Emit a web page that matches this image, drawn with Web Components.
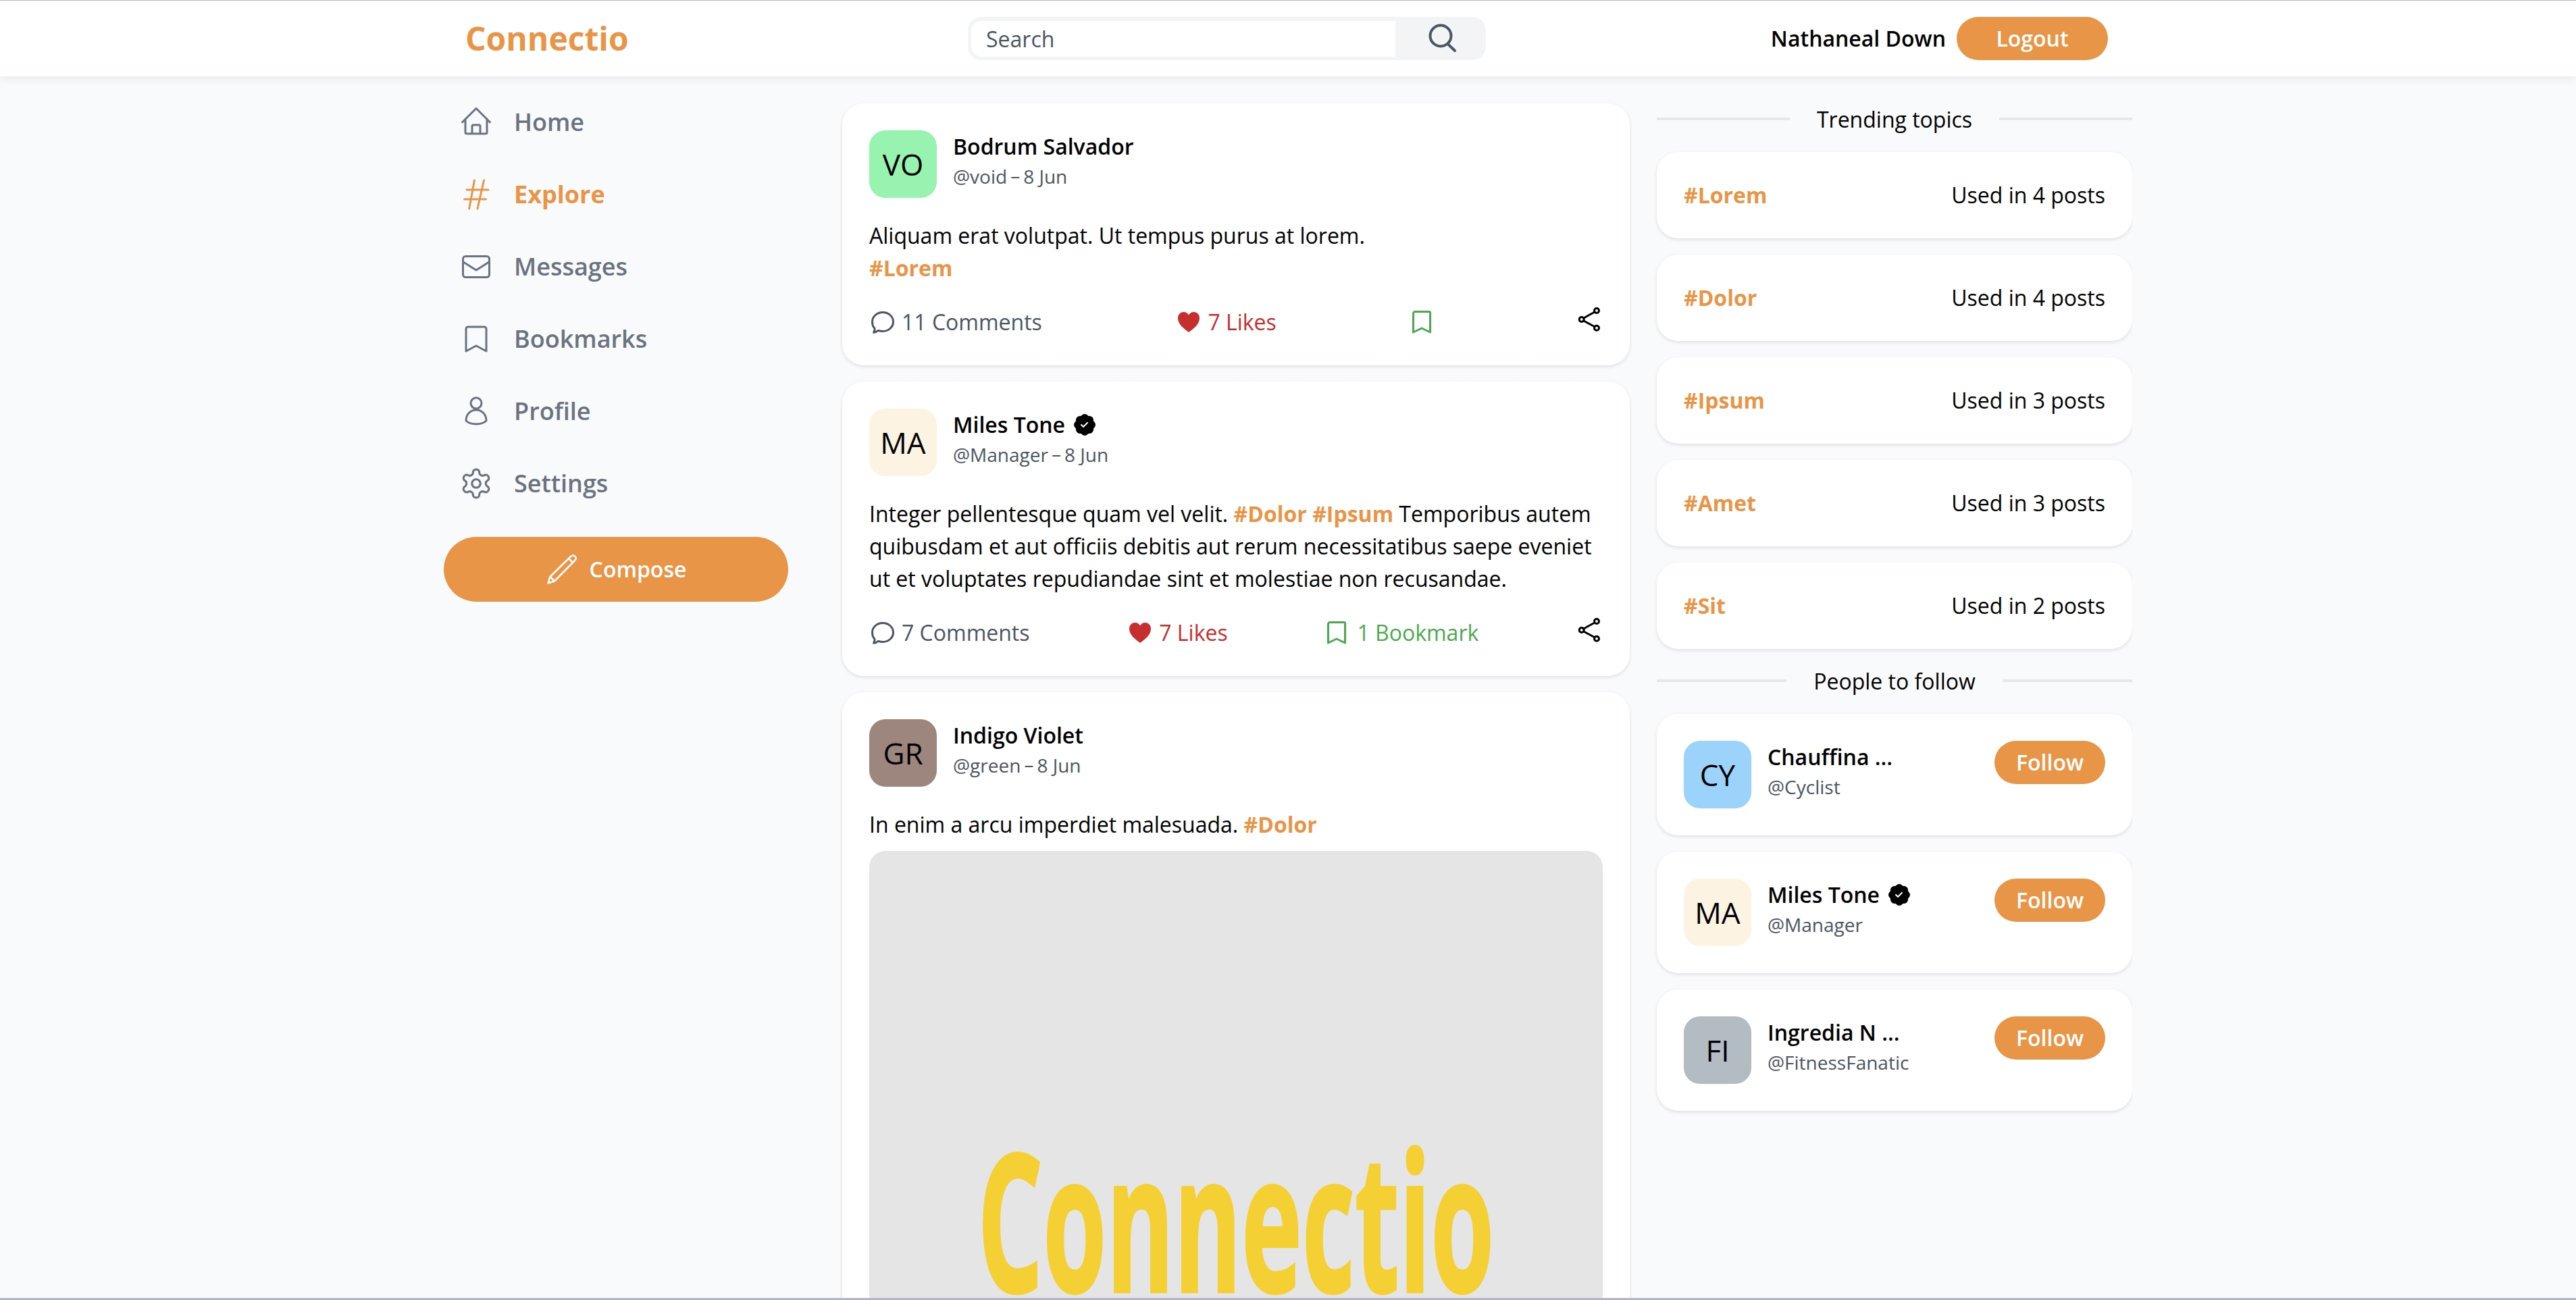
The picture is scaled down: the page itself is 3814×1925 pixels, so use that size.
<!DOCTYPE html>
<html lang="en">
<head>
<meta charset="utf-8">
<title>Connectio</title>
<style>
html,body{margin:0;padding:0;height:1925px;overflow:hidden;background:#f9fafb}
body{font-family:"Open Sans","Noto Sans",sans-serif;font-size:32px;line-height:48px;color:#000;box-sizing:border-box;border-bottom:3px solid #b1b6c6}
.layout{display:flex;width:2500px;margin:0 auto;height:1809px;overflow:hidden}
.layout>side-nav{width:510px;margin-right:80px;flex:none}
.layout>feed-col{width:1166px;margin-right:40px;flex:none}
.layout>aside-col{width:704px;flex:none}
b.tag{color:#e89548;font-weight:700}
</style>
</head>
<body>
<app-header user="Nathaneal Down"></app-header>
<div class="layout">
  <side-nav>
    <nav-item icon="house" label="Home"></nav-item>
    <nav-item icon="hash" label="Explore" active></nav-item>
    <nav-item icon="mail" label="Messages"></nav-item>
    <nav-item icon="bookmark" label="Bookmarks"></nav-item>
    <nav-item icon="person" label="Profile"></nav-item>
    <nav-item icon="gear" label="Settings"></nav-item>
    <compose-button slot="compose"></compose-button>
  </side-nav>
  <feed-col>
    <post-card initials="VO" color="#98f2b0" name="Bodrum Salvador" handle="@void" comments="11 Comments" likes="7 Likes" bookmarks="">
      Aliquam erat volutpat. Ut tempus purus at lorem.<br><b class="tag">#Lorem</b>
    </post-card>
    <post-card initials="MA" color="#fdf3e2" name="Miles Tone" verified handle="@Manager" comments="7 Comments" likes="7 Likes" bookmarks="1 Bookmark">
      Integer pellentesque quam vel velit. <b class="tag">#Dolor</b> <b class="tag">#Ipsum</b> Temporibus autem quibusdam et aut officiis debitis aut rerum necessitatibus saepe eveniet ut et voluptates repudiandae sint et molestiae non recusandae.
    </post-card>
    <post-card initials="GR" color="#9d867d" name="Indigo Violet" handle="@green" comments="3 Comments" likes="5 Likes" bookmarks="">
      In enim a arcu imperdiet malesuada. <b class="tag">#Dolor</b>
      <logo-image slot="media"></logo-image>
    </post-card>
  </feed-col>
  <aside-col>
    <section-title>Trending topics</section-title>
    <trend-card tag="#Lorem" count="Used in 4 posts"></trend-card>
    <trend-card tag="#Dolor" count="Used in 4 posts"></trend-card>
    <trend-card tag="#Ipsum" count="Used in 3 posts"></trend-card>
    <trend-card tag="#Amet" count="Used in 3 posts"></trend-card>
    <trend-card tag="#Sit" count="Used in 2 posts"></trend-card>
    <section-title>People to follow</section-title>
    <follow-card initials="CY" color="#9bd3fb" name="Chauffina ..." handle="@Cyclist"></follow-card>
    <follow-card initials="MA" color="#fdf3e2" name="Miles Tone" verified handle="@Manager"></follow-card>
    <follow-card initials="FI" color="#b3bbc3" name="Ingredia N ..." handle="@FitnessFanatic"></follow-card>
  </aside-col>
</div>
<script>
const ICONS={
 house:['0 0 48 48','<path d="M3.5 24 24 3.5 44.5 24M8 19v20a2 2 0 0 0 2 2h28a2 2 0 0 0 2-2V19M18 41V30a2 2 0 0 1 2-2h8a2 2 0 0 1 2 2v11"/>',3],
 hash:['0 0 48 48','<path d="M21.4 3 13.7 45M35.5 3 26 45M10 17h32M6.500 31h32"/>',3],
 mail:['0 0 48 48','<rect x="4.500" y="8.500" width="39" height="31" rx="4"/><path d="M5 17l19 12 19-12"/>',3],
 bookmark:['0 0 48 48','<path d="M9 42V9a3 3 0 0 1 3-3h24a3 3 0 0 1 3 3v33l-15-8z"/>',3],
 person:['0 0 48 48','<circle cx="24" cy="12" r="8"/><path d="M9 38c0-10 7-16 15-16s15 6 15 16c-4 4-10 5-15 5s-11-1-15-5z"/>',3],
 gear:['0.5 0.5 23 23','<path d="M12.220 2h-.44a2 2 0 0 0-2 2v.18a2 2 0 0 1-1 1.730l-.43.25a2 2 0 0 1-2 0l-.15-.08a2 2 0 0 0-2.730.73l-.22.38a2 2 0 0 0 .73 2.730l.15.1a2 2 0 0 1 1 1.720v.51a2 2 0 0 1-1 1.740l-.15.09a2 2 0 0 0-.73 2.730l.22.38a2 2 0 0 0 2.730.73l.15-.08a2 2 0 0 1 2 0l.43.25a2 2 0 0 1 1 1.730V20a2 2 0 0 0 2 2h.44a2 2 0 0 0 2-2v-.18a2 2 0 0 1 1-1.730l.43-.25a2 2 0 0 1 2 0l.15.08a2 2 0 0 0 2.730-.73l.22-.39a2 2 0 0 0-.73-2.730l-.15-.08a2 2 0 0 1-1-1.740v-.5a2 2 0 0 1 1-1.740l.15-.09a2 2 0 0 0 .73-2.730l-.22-.38a2 2 0 0 0-2.730-.73l-.15.08a2 2 0 0 1-2 0l-.43-.25a2 2 0 0 1-1-1.730V4a2 2 0 0 0-2-2z"/><circle cx="12" cy="12" r="3"/>',1.5],
 pencil:['0 0 48 48','<path d="M3.500 44.500 6.500 35 37 5c2-2 5-2 6.500 0 2 2 1.500 4-.5 6L13 41.500zM6.500 35 13 41.500M34 8l6 6"/>',2.5],
 search:['0 0 48 48','<circle cx="24" cy="20" r="15.500"/><path d="M34.500 32 45 42"/>',4],
 comment:['0 0 40 40','<path d="M20 5.500c8.500 0 15.500 6 15.500 14s-7 14-15.500 14c-2.500 0-4.500-.4-6.500-1.200-2 1.600-4.500 2.700-7 3 1-1.500 1.700-3.500 1.600-6C5.500 27 4.500 23.500 4.500 19.500 4.500 11.500 11.500 5.500 20 5.500z"/>',3],
 share:['0 0 40 40','<circle cx="31" cy="3" r="3.500"/><circle cx="8.700" cy="16" r="3.500"/><circle cx="31" cy="28.700" r="3.500"/><path d="M28 5 11.700 14M11.700 18 28 26.700"/>',3],
 mark:['0 0 40 40','<path d="M5.500 35V7a2.500 2.500 0 0 1 2.500-2.500h22A2.500 2.500 0 0 1 30.500 7v28l-12.500-6z"/>',3]
};
function icon(name,size,color){
 const [vb,body,sw]=ICONS[name];
 return `<svg xmlns="http://www.w3.org/2000/svg" width="${size}" height="${size}" viewBox="${vb}" fill="none" stroke="${color}" stroke-width="${sw}" stroke-linecap="round" stroke-linejoin="round" style="display:block;overflow:visible;flex:none">${body}</svg>`;
}
const HEART='<svg xmlns="http://www.w3.org/2000/svg" width="40" height="40" viewBox="0 0 40 40" fill="#c62f2f" style="display:block;flex:none"><path d="M20 35C12 29 4 23 4 14 4 8 8.500 5 12.500 5 16 5 18.500 7 20 9.500 21.500 7 24 5 27.500 5 31.500 5 36 8 36 14 36 23 28 29 20 35z"/></svg>';
const BADGE='<svg xmlns="http://www.w3.org/2000/svg" width="32" height="32" viewBox="0 0 16 16" fill="#000" style="display:block;flex:none"><path d="M10.067.87a2.890 2.890 0 0 0-4.134 0l-.622.638-.89-.011a2.890 2.890 0 0 0-2.924 2.924l.01.89-.636.622a2.890 2.890 0 0 0 0 4.134l.637.622-.011.89a2.890 2.890 0 0 0 2.924 2.924l.89-.01.622.636a2.890 2.890 0 0 0 4.134 0l.622-.637.89.011a2.890 2.890 0 0 0 2.924-2.924l-.01-.89.636-.622a2.890 2.890 0 0 0 0-4.134l-.637-.622.011-.89a2.890 2.890 0 0 0-2.924-2.924l-.89.01-.622-.636zm.287 5.984-3 3a.5.5 0 0 1-.708 0l-1.500-1.500a.5.5 0 1 1 .708-.708L7 8.793l2.646-2.647a.5.5 0 0 1 .708.708z"/></svg>';

class Comp extends HTMLElement{
 connectedCallback(){ if(this.shadowRoot) return; this.attachShadow({mode:'open'}); this.shadowRoot.innerHTML=this.render(); }
 a(n){return this.getAttribute(n)||''}
}
const ORANGE='#e89548';
const GREEN='#4ea852';
const BTN=`font:600 32px/48px "Open Sans",sans-serif;color:#fff;background:${ORANGE};border:0;border-radius:999px;display:flex;align-items:center;justify-content:center;padding:0`;
const CARD='background:#fff;border-radius:32px;box-shadow:0 2px 6px rgba(0,0,0,.08),0 2px 4px rgba(0,0,0,.04);box-sizing:border-box';

customElements.define('app-header',class extends Comp{render(){return `<style>
 :host{display:block;height:113px;box-sizing:border-box;background:#fff;border-top:1px solid #bbb;box-shadow:0 4px 14px rgba(0,0,0,.07);position:relative;z-index:2}
 .in{width:2500px;height:112px;margin:0 auto;box-sizing:border-box;display:flex;align-items:center;padding:0 36px 0 32px}
 .logo{font:700 48px/64px "Open Sans",sans-serif;color:${ORANGE};width:744px;flex:none}
 .search{width:767px;height:64px;flex:none;display:flex;background:#f3f4f6;border-radius:20px;overflow:hidden}
 .input{flex:1;margin:6px 0 5px 5px;background:#fff;border-radius:16px 0 0 16px;padding-left:22px;font-size:32px;line-height:53px;color:#4b5563}
 .btn{width:134px;flex:none;display:flex;align-items:center;justify-content:center}
 .user{margin-left:auto;display:flex;align-items:center;gap:16px;font-weight:600;font-size:32px}
 .logout{${BTN};width:224px;height:64px}
</style><div class="in"><div class="logo">Connectio</div>
<div class="search"><div class="input">Search</div><div class="btn">${icon('search',48,'#4b5563')}</div></div>
<div class="user"><span>${this.a('user')}</span><div class="logout">Logout</div></div></div>`}});

customElements.define('side-nav',class extends Comp{render(){return `<style>
 :host{display:block;padding-top:18px;box-sizing:border-box}
 .list{display:flex;flex-direction:column;gap:8px}
 .c{margin-top:30px}
</style><div class="list"><slot></slot></div><div class="c"><slot name="compose"></slot></div>`}});

customElements.define('nav-item',class extends Comp{render(){const on=this.hasAttribute('active');return `<style>
 :host{display:flex;height:99px;align-items:center;gap:32px;padding-left:24px;font-size:36px;line-height:56px;font-weight:${on?700:600};color:${on?ORANGE:'#6b7280'}}
</style>${icon(this.a('icon'),48,on?ORANGE:'#6b7280')}<span>${this.a('label')}</span>`}});

customElements.define('compose-button',class extends Comp{render(){return `<style>
 :host{display:block}
 .b{${BTN};height:96px;gap:17px}
</style><div class="b">${icon('pencil',48,'#fff')}<span>Compose</span></div>`}});

customElements.define('user-avatar',class extends Comp{render(){return `<style>
 :host{display:flex;flex:none;width:100px;height:100px;align-items:center;justify-content:center;border-radius:24px;background:${this.a('color')};font-size:44px;line-height:60px;color:#000}
</style>${this.a('initials')}`}});

customElements.define('post-card',class extends Comp{render(){
 const bm=this.a('bookmarks');
 return `<style>
 :host{display:block;${CARD};padding:40px;margin-bottom:24px}
 .head{display:flex;gap:24px}
 .name{display:flex;align-items:center;gap:13px;font-weight:600;line-height:48px;height:48px}
 .sub{font-size:28px;line-height:40px;color:#4b5563}
 .sub i{font-style:normal;margin:0 5px;position:relative;top:-2px}
 .text{margin-top:32px;font-size:32px;line-height:48px;color:#000}
 .media{display:block}
 .acts{display:flex;justify-content:space-between;margin-top:32px;height:48px;align-items:center}
 .act{display:flex;align-items:center;gap:8px;font-size:32px;line-height:48px;color:#4b5563}
 .like{color:#c62f2f}.mark{color:${GREEN}}
 .share{width:40px;height:40px}
</style>
<div class="head"><user-avatar initials="${this.a('initials')}" color="${this.a('color')}"></user-avatar>
<div><div class="name"><span>${this.a('name')}</span>${this.hasAttribute('verified')?BADGE:''}</div>
<div class="sub">${this.a('handle')}<i>–</i>8 Jun</div></div></div>
<div class="text"><slot></slot></div><slot name="media" class="media"></slot>
<div class="acts"><div class="act">${icon('comment',40,'#4b5563')}<span>${this.a('comments')}</span></div>
<div class="act like">${HEART}<span>${this.a('likes')}</span></div>
<div class="act mark">${icon('mark',40,GREEN)}<span>${bm}</span></div>
<div class="act share">${icon('share',40,'#000')}</div></div>`}});

customElements.define('logo-image',class extends Comp{render(){return `<style>
 :host{display:flex;width:1086px;height:1086px;margin-top:15px;border-radius:24px;background:#e5e5e5;align-items:center;justify-content:center;overflow:hidden}
 span{display:block;font:700 284px/1 "Open Sans",sans-serif;color:#f4d035;transform:scaleX(.535);white-space:nowrap;-webkit-text-stroke:4px #f4d035}
</style><span>Connectio</span>`}});

customElements.define('section-title',class extends Comp{render(){return `<style>
 :host{display:flex;align-items:center;gap:40px;height:48px;margin-bottom:24px;font-size:32px;line-height:48px;color:#000}
 u{flex:1;height:4px;background:#e5e7eb;text-decoration:none;margin-top:-2px}
</style><u></u><span><slot></slot></span><u></u>`}});

customElements.define('trend-card',class extends Comp{render(){return `<style>
 :host{display:flex;height:128px;${CARD};margin-bottom:24px;padding:0 40px;align-items:center;justify-content:space-between;font-size:32px}
 b{color:${ORANGE};font-weight:700}
</style><b>${this.a('tag')}</b><span>${this.a('count')}</span>`}});

customElements.define('follow-card',class extends Comp{render(){return `<style>
 :host{display:flex;${CARD};padding:40px;margin-bottom:24px;gap:24px}
 .info{flex:1;min-width:0}
 .name{display:flex;align-items:center;gap:13px;font-weight:600;line-height:48px;height:48px}
 .sub{font-size:28px;line-height:40px;color:#4b5563}
 .f{${BTN};width:164px;height:64px;flex:none}
</style><user-avatar initials="${this.a('initials')}" color="${this.a('color')}"></user-avatar>
<div class="info"><div class="name"><span>${this.a('name')}</span>${this.hasAttribute('verified')?BADGE:''}</div><div class="sub">${this.a('handle')}</div></div>
<div class="f">Follow</div>`}});

customElements.define('feed-col',class extends Comp{render(){return `<style>:host{display:block;padding-top:40px;box-sizing:border-box}</style><slot></slot>`}});
customElements.define('aside-col',class extends Comp{render(){return `<style>:host{display:block;padding-top:40px;box-sizing:border-box}</style><slot></slot>`}});
</script>
</body>
</html>
